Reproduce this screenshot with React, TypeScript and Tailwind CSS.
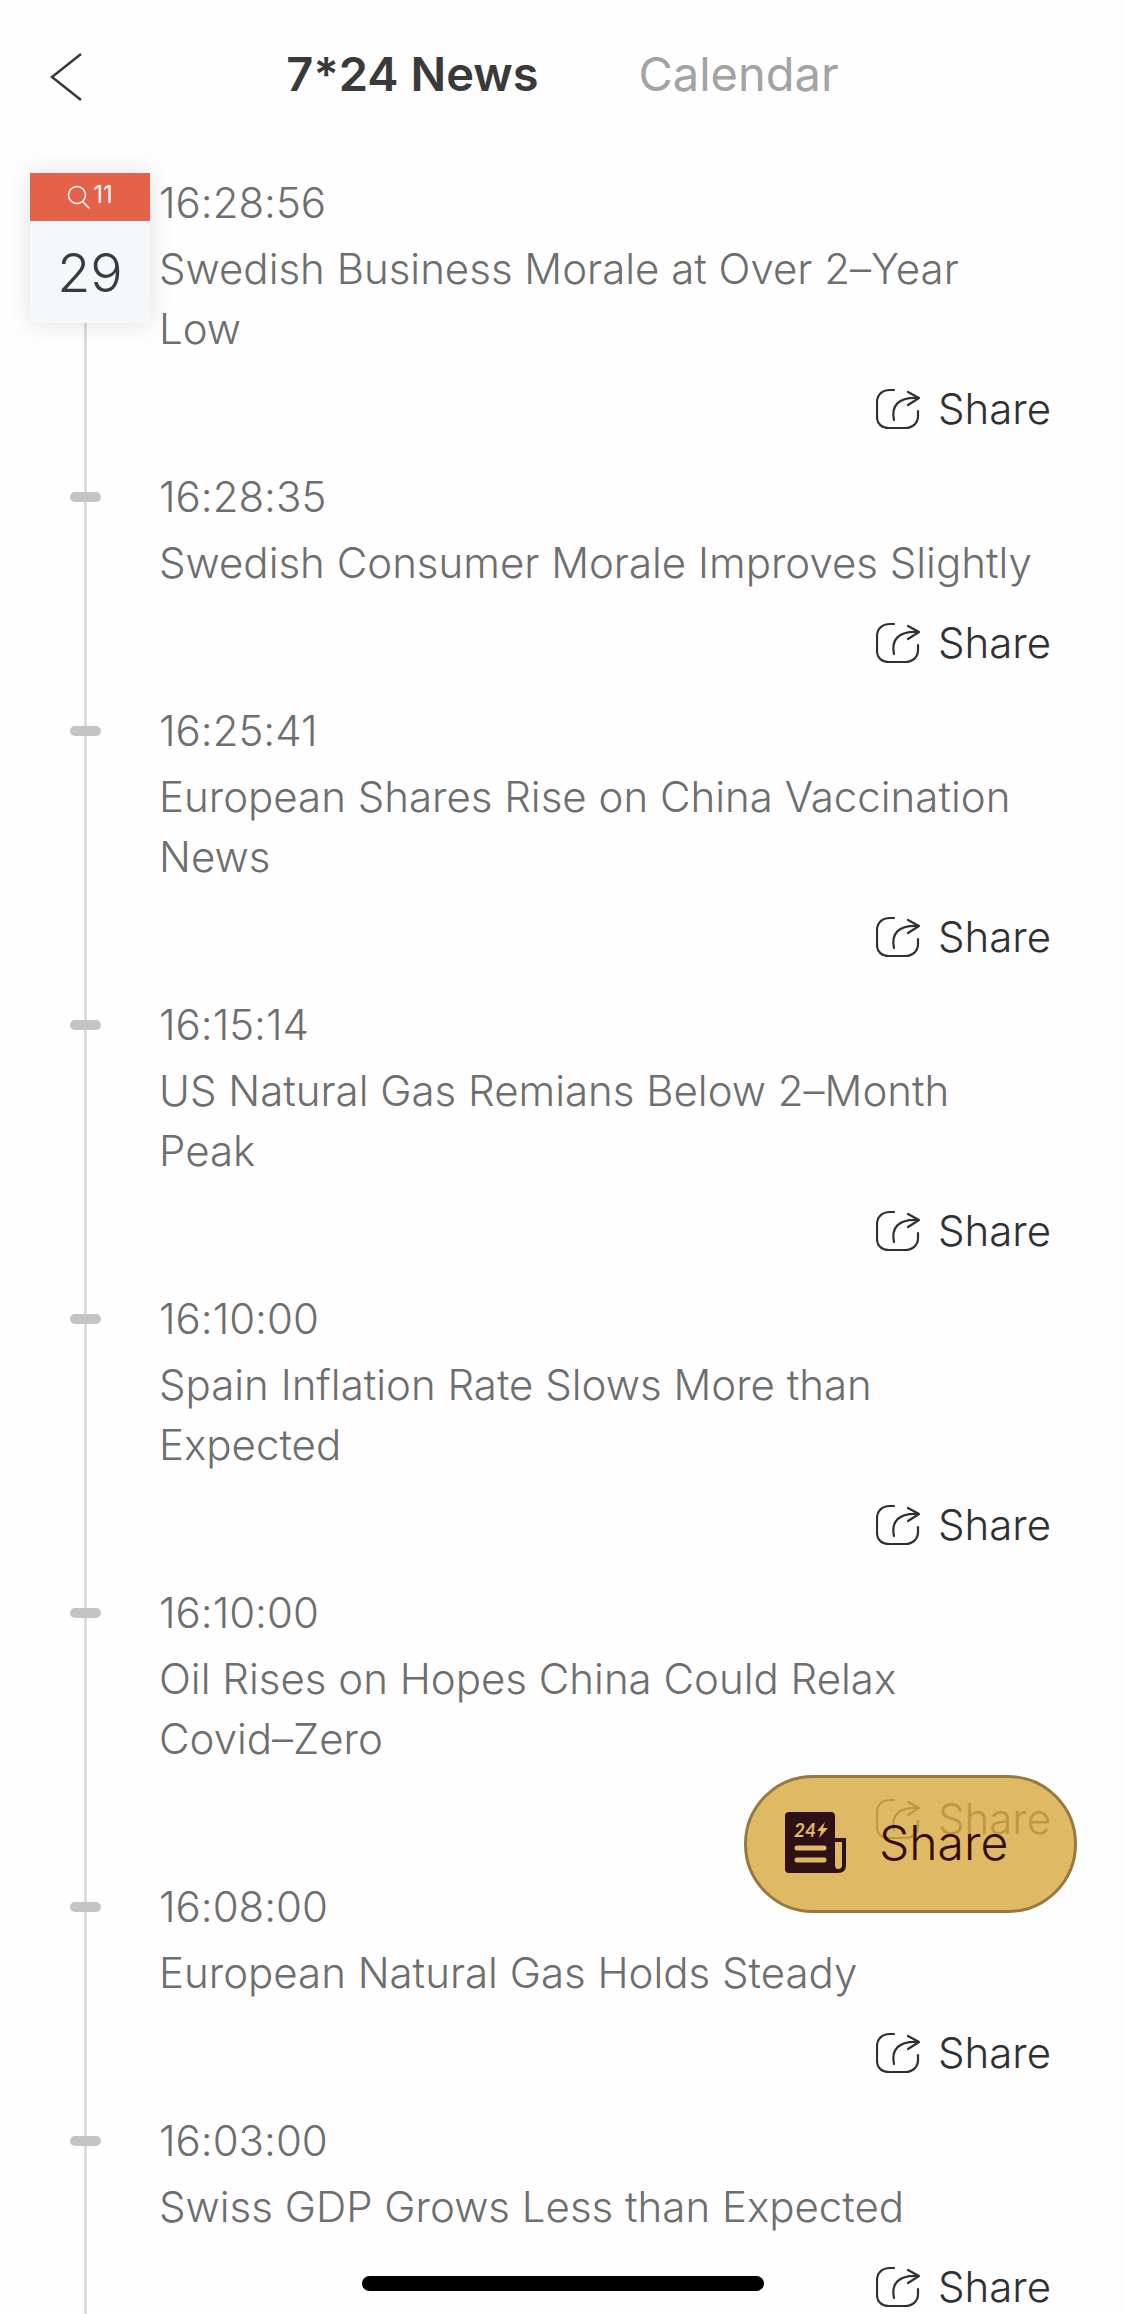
import React from "react";

// \u2060 keeps "Covid–Zero" on one line
const newsItems = [
  { time: "16:28:56", title: "Swedish Business Morale at Over 2–Year Low" },
  { time: "16:28:35", title: "Swedish Consumer Morale Improves Slightly" },
  { time: "16:25:41", title: "European Shares Rise on China Vaccination News" },
  { time: "16:15:14", title: "US Natural Gas Remians Below 2–Month Peak" },
  { time: "16:10:00", title: "Spain Inflation Rate Slows More than Expected" },
  { time: "16:10:00", title: "Oil Rises on Hopes China Could Relax Covid–\u2060Zero" },
  { time: "16:08:00", title: "European Natural Gas Holds Steady" },
  { time: "16:03:00", title: "Swiss GDP Grows Less than Expected" },
];

const ShareIcon = () => (
  <svg
    className="w-11 h-11"
    viewBox="0 0 44 44"
    fill="none"
    stroke="currentColor"
    strokeWidth="2.2"
    strokeLinecap="round"
    strokeLinejoin="round"
    aria-hidden="true"
  >
    <path d="M18 3H14C6 3 1 8 1 15V30C1 37 6 41 13 41H29C37 41 42 36 42 29V24" />
    <path d="M18 33C15 19 22 10 42 11" />
    <path d="M32 5L43 11L32 18" />
  </svg>
);

const NewspaperIcon = () => (
  <svg className="w-[62px] h-[62px]" viewBox="0 0 62 62" aria-hidden="true">
    <path
      fill="#2e1114"
      fillRule="evenodd"
      d="M4 0H46Q50 0 50 4V26H61V53Q61 61 53 61H4Q0 61 0 57V4Q0 0 4 0ZM50 30V53Q50 57 53 57Q57 57 57 53V30Z"
    />
    <path stroke="#e0b964" strokeWidth="5" strokeLinecap="round" d="M12 36H39M12 48H39" />
    <text x="9" y="25" fill="#e0b964" fontSize="19" fontWeight="700" fontStyle="italic" fontFamily="Lato, sans-serif">
      24
    </text>
    <path fill="#e0b964" d="M40 10L32 19H36L34 26L43 16H38Z" />
  </svg>
);

const DateBadge = () => (
  <div className="absolute left-[30px] top-0 w-[120px] bg-[#f5f7fb] shadow-[0_0_24px_rgba(0,0,0,0.12)] text-center">
    <div className="flex items-start justify-center gap-0.5 h-12 pt-3 bg-[#e4614a] text-white">
      <svg className="w-6 h-6" viewBox="0 0 24 24" fill="none" stroke="currentColor" strokeWidth="1.5" aria-hidden="true">
        <circle cx="10" cy="10" r="8.5" />
        <path d="M16 17L22 23" strokeLinecap="round" />
      </svg>
      <span className="text-2xl leading-5">11</span>
    </div>
    <div className="h-[102px] text-[54px] leading-[104px] font-light text-[#393b3e]">29</div>
  </div>
);

const NewsItem = ({ time, title, first }: { time: string; title: string; first: boolean }) => (
  <li className="flex">
    <div className="relative w-[159px] shrink-0">
      <div className="absolute inset-y-0 left-[84px] w-[3px] bg-[#dcdcdc]"></div>
      {first ? (
        <DateBadge />
      ) : (
        <div className="absolute left-[70px] top-[25px] w-[31px] h-[10px] rounded-full bg-[#c4c4c4]"></div>
      )}
    </div>
    <div className="flex-1 pr-[74px] pb-7 text-[42px] leading-[60px] font-light text-[#6e6e6e]">
      <time className="block">{time}</time>
      <h2 className="mt-[6px]">{title}</h2>
      <button type="button" className="flex items-center gap-[18px] ml-auto mt-5 text-[#303030]">
        <ShareIcon />
        Share
      </button>
    </div>
  </li>
);

const App = () => {
  return (
    <div className="relative flex flex-col h-screen overflow-hidden bg-[#fefefe] font-['Inter',sans-serif] [font-feature-settings:'calt'_0]">
      <header className="relative flex items-center justify-center h-[149px] shrink-0">
        <button type="button" aria-label="Back" className="absolute left-[50px] top-[52px] text-[#393939]">
          <svg className="w-8 h-[50px]" viewBox="0 0 32 50" fill="none" stroke="currentColor" strokeWidth="2.5">
            <path d="M31 2L2 25L31 48" />
          </svg>
        </button>
        <nav className="flex gap-[100px] pb-0.5 text-[47px] leading-[60px]">
          <button type="button" className="font-semibold text-[#3a3a3a]">7*24 News</button>
          <button type="button" className="text-[#a3a3a3]">Calendar</button>
        </nav>
      </header>

      <main className="flex-1 pt-6">
        <ul>
          {newsItems.map((item, index) => (
            <NewsItem key={index} time={item.time} title={item.title} first={index === 0} />
          ))}
        </ul>
      </main>

      {/* Floating share button */}
      <button
        type="button"
        className="absolute right-12 bottom-[401px] flex items-center gap-8 w-[333px] h-[138px] pl-[38px] pb-0.5 rounded-full border-3 border-[#967841] bg-[#daac46]/84 text-5xl font-light text-[#340c0a]"
      >
        <NewspaperIcon />
        Share
      </button>

      {/* Home indicator */}
      <div className="absolute bottom-[23px] inset-x-0 mx-auto w-[402px] h-[15px] rounded-full bg-black"></div>
    </div>
  );
};

export default App;
